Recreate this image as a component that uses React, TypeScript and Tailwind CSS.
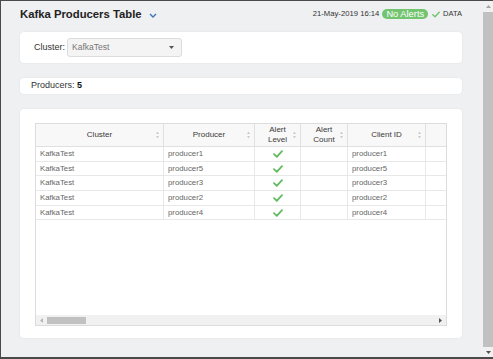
import React from 'react';

const ROWS = [
    { cluster: 'KafkaTest', producer: 'producer1', clientId: 'producer1' },
    { cluster: 'KafkaTest', producer: 'producer5', clientId: 'producer5' },
    { cluster: 'KafkaTest', producer: 'producer3', clientId: 'producer3' },
    { cluster: 'KafkaTest', producer: 'producer2', clientId: 'producer2' },
    { cluster: 'KafkaTest', producer: 'producer4', clientId: 'producer4' },
];

const GRID = 'grid grid-cols-[128px_91px_46px_47px_78px_90px] w-[480px]';

function SortIcon() {
    return (
        <svg width="3" height="7" viewBox="0 0 3 7" className="absolute right-[4px] top-1/2 -translate-y-1/2">
            <path d="M1.5 0 L3 2.5 L0 2.5 Z" fill="#cacaca" />
            <path d="M1.5 7 L3 4.5 L0 4.5 Z" fill="#cacaca" />
        </svg>
    );
}

function Check({ color = '#62bb60', w = 10, h = 8 }: { color?: string; w?: number; h?: number }) {
    return (
        <svg width={w} height={h} viewBox="0 0 10 8">
            <polyline points="1,4.2 3.8,6.8 9,1.2" fill="none" stroke={color} strokeWidth="1.8" strokeLinecap="round" strokeLinejoin="round" />
        </svg>
    );
}

function HeadCell({ children, last }: { children?: React.ReactNode; last?: boolean }) {
    return (
        <div className={`relative flex items-center justify-center text-center leading-[10px] text-[8px] text-[#3a3a3a] border-b border-[#e0e0e0] ${last ? '' : 'border-r'}`}>
            {children}
            {children && <SortIcon />}
        </div>
    );
}

function Cell({ children, center }: { children?: React.ReactNode; center?: boolean }) {
    return (
        <div className={`flex items-center text-[7.8px] text-[#666] border-b border-r border-[#e8e8e8] px-[4px] ${center ? 'justify-center' : ''}`}>
            {children}
        </div>
    );
}

export default function App() {
    return (
        <div className="w-[493px] h-[359px] flex border-l border-t border-b-2 border-[#4a4a4a] bg-[#eff0f2] overflow-hidden font-['Liberation_Sans',Arial,sans-serif]">
            <div className="flex-1 min-w-0 flex flex-col pl-[19px] pr-[21px]">
                {/* Title bar */}
                <div className="h-[31px] flex items-start pt-[6px]">
                    <div className="flex items-center h-[14px]">
                        <h1 className="text-[11.3px] font-bold text-[#222] leading-[14px]">Kafka Producers Table</h1>
                        <svg width="8" height="5" viewBox="0 0 8 5" className="ml-[7px] mt-[2px]">
                            <polyline points="1,1 4,4 7,1" fill="none" stroke="#3f74b5" strokeWidth="1.4" />
                        </svg>
                    </div>
                    <div className="ml-auto flex items-center h-[14px]">
                        <span className="text-[7.7px] text-[#333]">21-May-2019 16:14</span>
                        <span className="ml-[3px] h-[10px] px-[4px] rounded-full bg-[#72c46f] text-white text-[9.3px] leading-[10px] flex items-center">No Alerts</span>
                        <span className="ml-[4px] flex items-center"><Check color="#72c46f" w={8} h={7} /></span>
                        <span className="ml-[3px] text-[7.5px] text-[#333]">DATA</span>
                    </div>
                </div>

                {/* Filter */}
                <div className="h-[31px] bg-white rounded-[4px] shadow-[0_0_2px_rgba(0,0,0,0.08)] flex items-center pl-[14px]">
                    <span className="text-[9px] text-[#333]">Cluster:</span>
                    <div className="ml-[2px] w-[115px] h-[19px] bg-[#f4f4f4] border border-[#dcdcdc] rounded-[3px] flex items-center pl-[4px] pr-[7px]">
                        <span className="text-[8.5px] text-[#777]">KafkaTest</span>
                        <svg width="5" height="3" viewBox="0 0 5 3" className="ml-auto">
                            <path d="M0 0 L5 0 L2.5 3 Z" fill="#555" />
                        </svg>
                    </div>
                </div>

                {/* Count */}
                <div className="mt-[15px] h-[16px] bg-white rounded-[4px] shadow-[0_0_2px_rgba(0,0,0,0.08)] flex items-center pl-[11px]">
                    <span className="text-[9px] text-[#333]">Producers: <b className="text-[#111]">5</b></span>
                </div>

                {/* Table card */}
                <div className="mt-[15px] h-[229px] bg-white rounded-[4px] shadow-[0_0_2px_rgba(0,0,0,0.08)] px-[15px] pt-[14px]">
                    <div className="h-[203px] border border-[#dcdcdc] flex flex-col overflow-hidden">
                        <div className="flex-1 overflow-hidden bg-white">
                            <div className={`${GRID} h-[23px] bg-[#f8f8f8]`}>
                                <HeadCell>Cluster</HeadCell>
                                <HeadCell>Producer</HeadCell>
                                <HeadCell>Alert<br />Level</HeadCell>
                                <HeadCell>Alert<br />Count</HeadCell>
                                <HeadCell>Client ID</HeadCell>
                                <HeadCell last />
                            </div>
                            {ROWS.map(r => (
                                <div key={r.producer} className={`${GRID} h-[14.7px]`}>
                                    <Cell>{r.cluster}</Cell>
                                    <Cell>{r.producer}</Cell>
                                    <Cell center><Check /></Cell>
                                    <Cell />
                                    <Cell>{r.clientId}</Cell>
                                    <Cell />
                                </div>
                            ))}
                        </div>
                        {/* horizontal scrollbar */}
                        <div className="h-[10px] bg-[#f1f1f1] flex items-center pl-[4px] pr-[4px]">
                            <svg width="3" height="5" viewBox="0 0 3 5"><path d="M3 0 L3 5 L0 2.5 Z" fill="#b8b8b8" /></svg>
                            <div className="ml-[4px] w-[39px] h-[7px] bg-[#c1c1c1]" />
                            <svg width="3" height="5" viewBox="0 0 3 5" className="ml-auto"><path d="M0 0 L0 5 L3 2.5 Z" fill="#555" /></svg>
                        </div>
                    </div>
                </div>
            </div>

            {/* page scrollbar */}
            <div className="w-[10px] shrink-0 bg-[#f1f1f1] flex flex-col">
                <div className="h-[11px] flex items-center justify-center">
                    <svg width="5" height="3" viewBox="0 0 5 3"><path d="M0 3 L5 3 L2.5 0 Z" fill="#a3a3a3" /></svg>
                </div>
                <div className="flex-1 bg-[#c1c1c1]" />
                <div className="h-[10px] flex items-center justify-center">
                    <svg width="5" height="3" viewBox="0 0 5 3"><path d="M0 0 L5 0 L2.5 3 Z" fill="#505050" /></svg>
                </div>
            </div>
        </div>
    );
}
